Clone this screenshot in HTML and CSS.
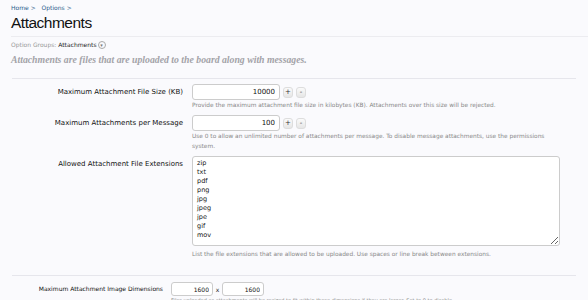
FILE: index.html
```html
<!DOCTYPE html>
<html lang="en">
<head>
    <meta charset="UTF-8">
    <title>Attachments - Options</title>
    <link rel="stylesheet" href="styles.css">
</head>
<body>
    <div class="page">
        <div class="breadcrumb">
            <a href="#">Home</a> &gt;
            <a href="#" class="crumb-next">Options</a> &gt;
        </div>
        <h1 class="title">Attachments</h1>

        <div class="option-groups">
            Option Groups: <span class="group-name">Attachments</span>
            <span class="group-menu">&#9662;</span>
        </div>
        <p class="description">Attachments are files that are uploaded to the board along with messages.</p>

        <div class="section">
            <div class="ctrl-unit">
                <label class="ctrl-label">Maximum Attachment File Size (KB)</label>
                <div class="ctrl">
                    <div class="spin">
                        <input type="text" class="text-num" value="10000">
                        <button class="spin-btn">+</button>
                        <button class="spin-btn">-</button>
                    </div>
                    <p class="hint">Provide the maximum attachment file size in kilobytes (KB). Attachments over this size will be rejected.</p>
                </div>
            </div>

            <div class="ctrl-unit">
                <label class="ctrl-label">Maximum Attachments per Message</label>
                <div class="ctrl">
                    <div class="spin">
                        <input type="text" class="text-num" value="100">
                        <button class="spin-btn">+</button>
                        <button class="spin-btn">-</button>
                    </div>
                    <p class="hint">Use 0 to allow an unlimited number of attachments per message. To disable message attachments, use the permissions system.</p>
                </div>
            </div>

            <div class="ctrl-unit">
                <label class="ctrl-label">Allowed Attachment File Extensions</label>
                <div class="ctrl">
                    <textarea class="extensions">zip
txt
pdf
png
jpg
jpeg
jpe
gif
mov</textarea>
                    <p class="hint hint-below">List the file extensions that are allowed to be uploaded. Use spaces or line break between extensions.</p>
                </div>
            </div>
        </div>

        <div class="section section-dims">
            <div class="ctrl-unit">
                <label class="ctrl-label">Maximum Attachment Image Dimensions</label>
                <div class="ctrl">
                    <div class="dims">
                        <input type="text" class="text-dim" value="1600">
                        <span class="times">x</span>
                        <input type="text" class="text-dim" value="1600">
                    </div>
                    <p class="hint">Files uploaded as attachments will be resized to fit within these dimensions if they are larger. Set to 0 to disable.</p>
                </div>
            </div>
        </div>
    </div>
</body>
</html>
```

FILE: styles.css
```css
body {
    margin: 0;
    padding: 0;
    background-color: #fafafd;
    font-family: 'DejaVu Sans', sans-serif;
    color: #222;
    overflow: hidden;
}
.page {
    padding: 4px 0 0 11px;
}
.breadcrumb {
    font-size: 6px;
    line-height: 8px;
    color: #2a5b8c;
}
.breadcrumb a {
    color: #2a5b8c;
    text-decoration: none;
}
.crumb-next {
    margin-left: 4px;
}
.title {
    margin: 1px 0 0;
    font-family: 'Liberation Sans', sans-serif;
    font-weight: normal;
    font-size: 15.5px;
    letter-spacing: -0.5px;
    line-height: 20px;
    color: #111;
    padding-bottom: 3px;
    border-bottom: 1px solid #ececf0;
}
.option-groups {
    margin-top: 3px;
    font-size: 6px;
    line-height: 10px;
    color: #999;
}
.group-name {
    color: #222;
}
.group-menu {
    display: inline-block;
    width: 6px;
    height: 6px;
    margin-left: -1px;
    border: 1px solid #aaa;
    border-radius: 50%;
    font-size: 5px;
    line-height: 6px;
    text-align: center;
    color: #777;
    vertical-align: middle;
}
.description {
    margin: 4px 0 0;
    font-family: 'Liberation Serif', serif;
    font-style: italic;
    font-weight: bold;
    font-size: 9.75px;
    line-height: 11px;
    color: #a3a3a8;
}
.section {
    margin: 13px 12px 0 1px;
    padding-top: 5px;
    border-top: 1px solid #e6e6ec;
}
.ctrl-unit {
    display: grid;
    grid-template-columns: 171px 1fr;
    column-gap: 9px;
    margin-bottom: 5px;
}
.ctrl-label {
    text-align: right;
    font-size: 7px;
    line-height: 16px;
    color: #111;
}
.spin {
    display: flex;
    align-items: center;
    gap: 3px;
}
.dims {
    display: grid;
    grid-template-columns: 42px 9px 42px;
    align-items: center;
    justify-items: center;
}
input, textarea {
    box-sizing: border-box;
    border: 1px solid #ccc;
    border-radius: 3px;
    background: #fff;
    font-family: 'DejaVu Sans', sans-serif;
    color: #111;
}
.text-num {
    width: 88px;
    height: 16px;
    padding: 0 4px;
    text-align: right;
    font-size: 7px;
}
.spin-btn {
    width: 10px;
    height: 11px;
    padding: 0;
    border: 1px solid #ddd;
    border-radius: 3px;
    background: linear-gradient(#fafafa, #e6e6e6);
    font-family: 'DejaVu Sans', sans-serif;
    font-size: 7px;
    line-height: 9px;
    color: #333;
}
.extensions {
    display: block;
    width: 368px;
    height: 90px;
    padding: 2px 4px;
    font-size: 6.5px;
    line-height: 9px;
    resize: vertical;
}
.hint {
    max-width: 358px;
    margin: 0;
    font-size: 5.85px;
    line-height: 10px;
    color: #888;
}
.hint-below {
    margin-top: 3px;
}
.section-dims {
    margin-top: 16px;
    padding-top: 6px;
}
.section-dims .ctrl-unit {
    grid-template-columns: 151px 1fr;
    column-gap: 8px;
}
.section-dims .ctrl-label {
    font-size: 6px;
    line-height: 14px;
}
.text-dim {
    width: 42px;
    min-width: 0;
    height: 14px;
    padding: 0 3px;
    text-align: right;
    font-size: 6px;
}
.times {
    font-size: 6px;
}
.section-dims .hint {
    font-size: 5px;
    line-height: 8px;
}
```
